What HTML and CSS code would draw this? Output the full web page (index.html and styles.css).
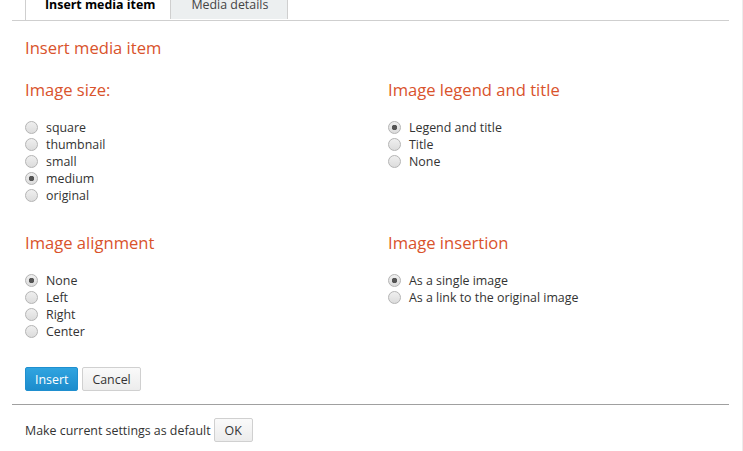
FILE: index.html
```html
<!DOCTYPE html>
<html>
<head>
<meta charset="utf-8">
<link rel="stylesheet" href="styles.css">
</head>
<body>
<div class="page">
  <div class="tabs">
    <div class="tab active">Insert media item</div>
    <div class="tab">Media details</div>
  </div>
  <div class="content">
    <h1 class="title">Insert media item</h1>
    <div class="grid">
      <section class="group">
        <h2 class="heading">Image size:</h2>
        <ul class="options">
          <li><label><input type="radio" name="size"> square</label></li>
          <li><label><input type="radio" name="size"> thumbnail</label></li>
          <li><label><input type="radio" name="size"> small</label></li>
          <li><label><input type="radio" name="size" checked> medium</label></li>
          <li><label><input type="radio" name="size"> original</label></li>
        </ul>
      </section>
      <section class="group">
        <h2 class="heading">Image legend and title</h2>
        <ul class="options">
          <li><label><input type="radio" name="legend" checked> Legend and title</label></li>
          <li><label><input type="radio" name="legend"> Title</label></li>
          <li><label><input type="radio" name="legend"> None</label></li>
        </ul>
      </section>
      <section class="group">
        <h2 class="heading">Image alignment</h2>
        <ul class="options">
          <li><label><input type="radio" name="align" checked> None</label></li>
          <li><label><input type="radio" name="align"> Left</label></li>
          <li><label><input type="radio" name="align"> Right</label></li>
          <li><label><input type="radio" name="align"> Center</label></li>
        </ul>
      </section>
      <section class="group">
        <h2 class="heading">Image insertion</h2>
        <ul class="options">
          <li><label><input type="radio" name="insertion" checked> As a single image</label></li>
          <li><label><input type="radio" name="insertion"> As a link to the original image</label></li>
        </ul>
      </section>
    </div>
    <div class="actions">
      <button class="btn primary">Insert</button>
      <button class="btn">Cancel</button>
    </div>
  </div>
  <div class="footer">
    <span>Make current settings as default</span>
    <button class="btn small">OK</button>
  </div>
</div>
</body>
</html>
```
FILE: styles.css
```css
html, body {
  margin: 0;
  padding: 0;
  background: #fff;
}
body {
  font-family: "Open Sans", "Noto Sans", sans-serif;
  font-size: 12.4px;
  color: #333;
  border-right: 1px solid #ececec;
  box-sizing: border-box;
  height: 451px;
  width: 743px;
}
.page {
  margin: 0 13px 0 12px;
}
.tabs {
  display: flex;
  padding-left: 13px;
  height: 20px;
  border-bottom: 1px solid #cfcfcf;
}
.tab {
  height: 19px;
  line-height: 10px;
  padding: 0 19px 0 20px;
  border-left: 1px solid #cfcfcf;
  border-right: 1px solid #cfcfcf;
  background: #eceff0;
  color: #444;
  box-sizing: border-box;
}
.tab.active {
  background: #fff;
  color: #000;
  font-weight: bold;
  border-right: none;
  padding: 0 15px 0 19px;
  height: 20px;
}
.content {
  padding: 17px 13px 0;
}
.title, .heading {
  margin: 0;
  font-weight: normal;
  font-size: 16.6px;
  line-height: 20px;
  color: #d9532c;
}
.title {
  margin-bottom: 22px;
}
.grid {
  display: grid;
  grid-template-columns: 363px 1fr;
  row-gap: 29px;
}
.options {
  list-style: none;
  margin: 19px 0 0;
  padding: 0;
}
.options li {
  height: 17px;
  line-height: 17px;
}
.options label {
  display: flex;
  align-items: center;
  gap: 7px;
}
.options input {
  appearance: none;
  -webkit-appearance: none;
  margin: 0 1px 0 0;
  width: 13px;
  height: 13px;
  border-radius: 50%;
  border: 1px solid #b4b4b4;
  background: linear-gradient(#efefef, #dcdcdc);
  box-sizing: border-box;
}
.options input:checked {
  background: radial-gradient(circle, #555 0, #555 2.5px, transparent 3px), linear-gradient(#efefef, #dcdcdc);
}
.actions {
  display: flex;
  gap: 4px;
  margin-top: 27px;
  padding-bottom: 13px;
  border-bottom: 1px solid #a0a0a0;
  margin-left: -13px;
  margin-right: -13px;
  padding-left: 13px;
}
.btn {
  font-family: inherit;
  font-size: 12.4px;
  height: 24px;
  padding: 0 9px;
  border: 1px solid #d0d0d0;
  border-radius: 2px;
  background: linear-gradient(#fafafa, #ececec);
  color: #333;
  margin: 0;
}
.btn.primary {
  background: linear-gradient(#30a4e0, #1c8ccc);
  border-color: #1f8fcf;
  color: #fff;
  padding: 0 9px;
}
.btn.small {
  padding: 0 10px;
}
.footer {
  display: flex;
  align-items: center;
  gap: 3px;
  padding: 13px 0 0 13px;
}
```
